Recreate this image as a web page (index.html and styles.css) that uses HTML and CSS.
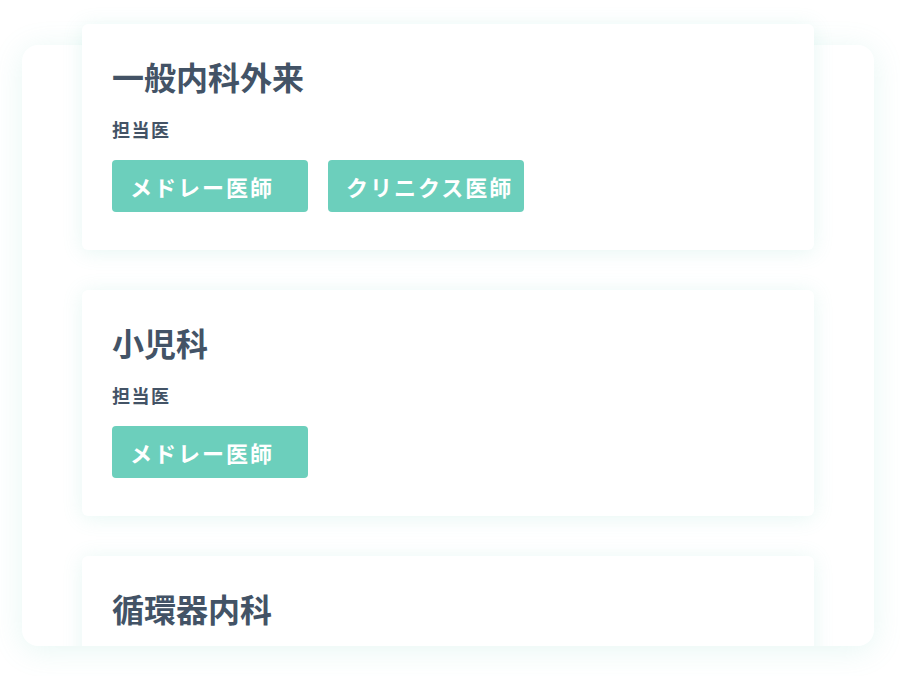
FILE: index.html
```html
<!DOCTYPE html>
<html lang="ja">
<head>
<meta charset="utf-8">
<link rel="stylesheet" href="styles.css">
</head>
<body>
<div class="stage">
  <div class="panel"></div>
  <div class="list">
    <section class="card">
      <h2 class="card-title">一般内科外来</h2>
      <p class="card-label">担当医</p>
      <div class="tags">
        <span class="tag">メドレー医師</span>
        <span class="tag">クリニクス医師</span>
      </div>
    </section>
    <section class="card">
      <h2 class="card-title">小児科</h2>
      <p class="card-label">担当医</p>
      <div class="tags">
        <span class="tag">メドレー医師</span>
      </div>
    </section>
    <section class="card">
      <h2 class="card-title">循環器内科</h2>
    </section>
  </div>
</div>
</body>
</html>
```

FILE: styles.css
```css
html, body {
  margin: 0;
  padding: 0;
  background: #ffffff;
}

body {
  font-family: "Noto Sans CJK JP", "Noto Sans", sans-serif;
  color: #435366;
}

.stage {
  display: grid;
  width: 900px;
  height: 676px;
  overflow: hidden;
}

.panel {
  grid-area: 1 / 1;
  margin: 45px 26px 0 22px;
  height: 601px;
  background: #ffffff;
  border-radius: 16px;
  box-shadow: 0 4px 30px rgba(108, 207, 188, 0.16);
}

.list {
  grid-area: 1 / 1;
  height: 646px;
  overflow: hidden;
  padding: 24px 86px 0 82px;
  box-sizing: border-box;
  display: flex;
  flex-direction: column;
  gap: 40px;
}

.card {
  flex: none;
  background: #ffffff;
  border-radius: 6px;
  box-shadow: 0 2px 20px rgba(108, 207, 188, 0.16);
  padding: 28px 30px 38px;
  height: 226px;
  box-sizing: border-box;
}

.card-title {
  margin: 0;
  font-size: 32px;
  line-height: 48px;
  font-weight: 700;
  color: #435366;
}

.card-label {
  margin: 16px 0 0;
  font-size: 18px;
  line-height: 27px;
  font-weight: 700;
  letter-spacing: 1.5px;
  color: #435366;
}

.tags {
  display: flex;
  gap: 20px;
  margin-top: 17px;
}

.tag {
  width: 196px;
  height: 52px;
  box-sizing: border-box;
  padding-left: 18px;
  display: flex;
  align-items: center;
  background: #6ccfbc;
  border-radius: 4px;
  color: #ffffff;
  font-size: 22px;
  font-weight: 700;
  letter-spacing: 2px;
  white-space: nowrap;
}
```
